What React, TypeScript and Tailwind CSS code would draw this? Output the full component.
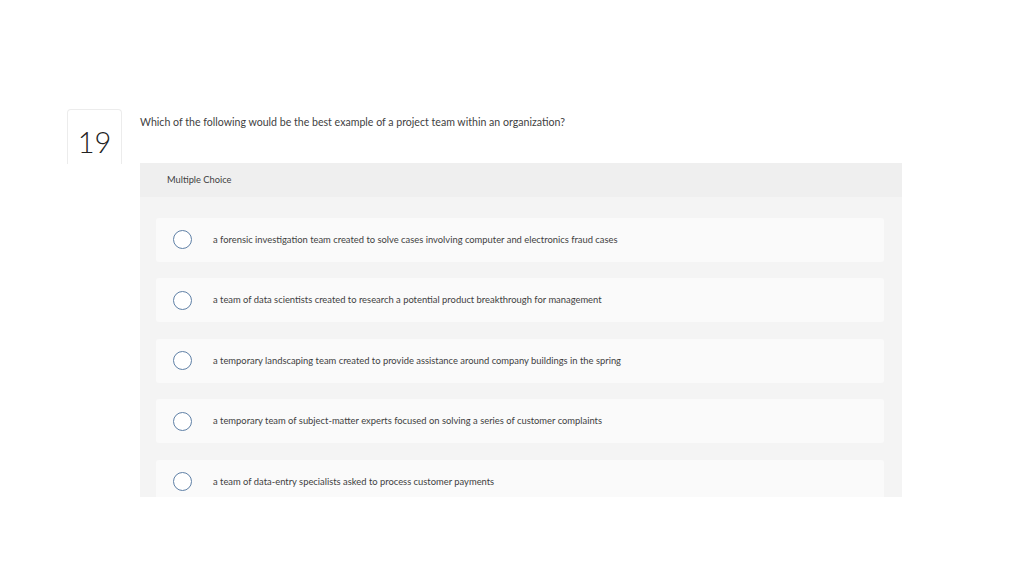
import React from "react";

const options = [
  "a forensic investigation team created to solve cases involving computer and electronics fraud cases",
  "a team of data scientists created to research a potential product breakthrough for management",
  "a temporary landscaping team created to provide assistance around company buildings in the spring",
  "a temporary team of subject-matter experts focused on solving a series of customer complaints",
  "a team of data-entry specialists asked to process customer payments",
];

function Radio() {
  return (
    <span className="w-[19px] h-[19px] shrink-0 rounded-full border-[1.5px] border-[#5f80a6] bg-white" />
  );
}

export default function App() {
  return (
    <div
      className="w-[1024px] h-[576px] bg-white overflow-hidden"
      style={{ fontFamily: "Lato, 'Open Sans', Arial, sans-serif" }}
    >
      <div className="flex pt-[109px] pl-[67px]">
        {/* Question number */}
        <div className="w-[55px] h-[55px] shrink-0 rounded-t-[4px] border-t border-x border-[#ececec] flex items-center justify-center">
          <span className="text-[29px] font-light text-[#222] leading-none mt-[8px]">19</span>
        </div>

        <div className="ml-[18px] flex flex-col">
          <p className="text-[10.6px] text-[#3f3f3f] leading-none mt-[8px]">
            Which of the following would be the best example of a project team within an organization?
          </p>

          {/* Answer panel */}
          <div className="mt-[35px] w-[762px] h-[334px] bg-[#f4f4f4] overflow-hidden">
            <div className="h-[34px] bg-[#efefef] flex items-center pl-[27px]">
              <span className="text-[9.3px] text-[#3f3f3f]">Multiple Choice</span>
            </div>
            <div className="flex flex-col gap-[16.5px] pt-[21px] pl-[16px] pr-[18px]">
              {options.map((o) => (
                <div
                  key={o}
                  className="h-[44px] shrink-0 bg-[#fafafa] rounded-[3px] flex items-center pl-[17px]"
                >
                  <Radio />
                  <span className="ml-[21px] text-[9.4px] text-[#3f3f3f]">{o}</span>
                </div>
              ))}
            </div>
          </div>
        </div>
      </div>
    </div>
  );
}
